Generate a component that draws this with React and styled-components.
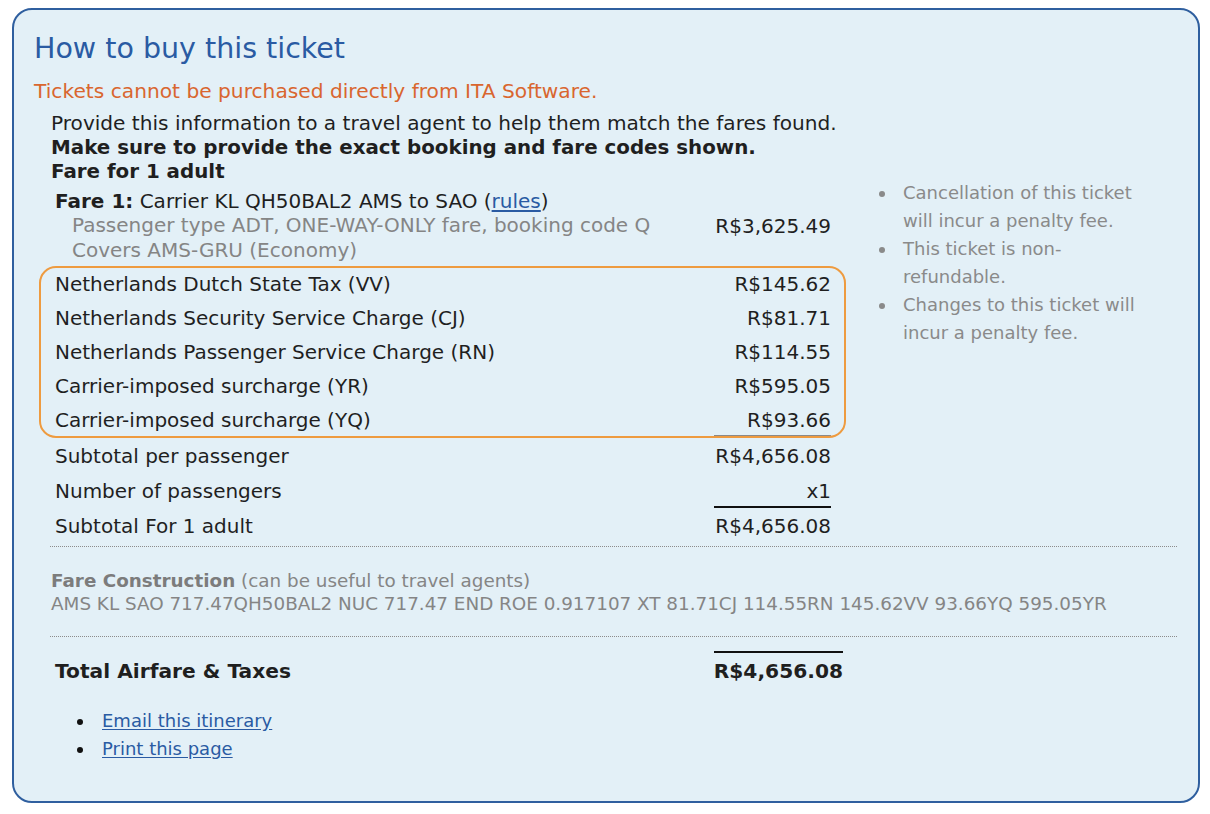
import React from 'react';
import styled, { createGlobalStyle } from 'styled-components';

const Global = createGlobalStyle`
  body {
    margin: 0;
    background: #ffffff;
    font-family: "DejaVu Sans", Verdana, sans-serif;
    color: #1f1f1f;
  }
`;

const Panel = styled.div`
  box-sizing: border-box;
  margin: 8px 0 0 12px;
  width: 1188px;
  height: 795px;
  border: 2px solid #2f5f9f;
  border-radius: 20px;
  background: #e3f0f7;
  padding: 22px 21px 0 20px;
`;

const Title = styled.h1`
  margin: 0;
  font-size: 28.5px;
  font-weight: normal;
  line-height: 34px;
  color: #2a5ba3;
`;

const Warning = styled.p`
  margin: 13px 0 0;
  font-size: 20.2px;
  line-height: 24px;
  color: #d9662f;
`;

const Intro = styled.div`
  margin: 8px 0 0 17px;
  font-size: 20.1px;
  line-height: 24px;
`;

const Bold = styled.div`
  font-weight: bold;
  font-size: 19.85px;
  line-height: 24px;
  padding-top: 1px;
  margin-bottom: -1px;
`;

const Main = styled.div`
  display: flex;
  align-items: flex-start;
  gap: 34px;
  margin-top: 1px;
`;

const Table = styled.div`
  width: 805px;
  margin-left: 6px;
  font-size: 20px;
`;

const Row = styled.div`
  display: grid;
  grid-template-columns: 1fr 117px;
  align-items: center;
  height: ${(p) => p.h || 34}px;
  padding: 0 14px 0 15px;
`;

const Amount = styled.div`
  text-align: right;
  white-space: nowrap;
  align-self: stretch;
  display: flex;
  align-items: center;
  justify-content: flex-end;
  border-top: 2px solid ${(p) => p.rule || 'transparent'};
  margin-top: -2px;
`;

const FareCell = styled.div`
  line-height: 24.5px;
`;

const Sub = styled.div`
  padding-left: 17px;
  color: #858585;
`;

const Link = styled.a`
  color: #2a5ba3;
  text-decoration: underline;
  text-underline-offset: 2px;
  cursor: pointer;
`;

const TaxBox = styled.div`
  outline: 2px solid #ee9b40;
  outline-offset: -1px;
  border-radius: 16px;
`;

const Bullets = styled.ul`
  margin: ${(p) => p.m || '0'};
  padding: 0;
  list-style: none;
`;

const Item = styled.li`
  display: flex;
  align-items: baseline;
  gap: ${(p) => p.gap || 18}px;
  &::before {
    content: '';
    flex: none;
    width: 6px;
    height: 6px;
    border-radius: 50%;
    background: ${(p) => p.dot || '#111'};
    transform: translateY(-2px);
  }
`;

const Notes = styled(Bullets)`
  width: 264px;
  margin-top: -5px;
  font-size: 18px;
  line-height: 28px;
  color: #8a8a8a;
`;

const Divider = styled.hr`
  margin: ${(p) => p.m || '0'};
  margin-left: 16px;
  border: none;
  border-top: 1px dotted #8c8c8c;
`;

const Construction = styled.div`
  margin: 22px 0 0 17px;
  font-size: 18.35px;
  line-height: 23px;
  color: #858585;
  b {
    color: #7c7c7c;
  }
`;

const TotalRow = styled.div`
  display: grid;
  grid-template-columns: 1fr auto;
  align-items: end;
  width: 805px;
  margin: 14px 0 0 6px;
  padding: 0 2px 0 15px;
  box-sizing: border-box;
  font-size: 20.2px;
  line-height: 24px;
  font-weight: bold;
`;

const TotalAmount = styled.div`
  border-top: 2px solid #111;
  padding-top: 6px;
  min-width: 129px;
  text-align: right;
`;

const Actions = styled(Bullets)`
  margin-top: 24px;
  padding-left: 43px;
  font-size: 18px;
  line-height: 28px;
`;

const taxes = [
  ['Netherlands Dutch State Tax (VV)', 'R$145.62'],
  ['Netherlands Security Service Charge (CJ)', 'R$81.71'],
  ['Netherlands Passenger Service Charge (RN)', 'R$114.55'],
  ['Carrier-imposed surcharge (YR)', 'R$595.05'],
  ['Carrier-imposed surcharge (YQ)', 'R$93.66'],
];

const notes = [
  'Cancellation of this ticket will incur a penalty fee.',
  'This ticket is non-refundable.',
  'Changes to this ticket will incur a penalty fee.',
];

export default function App() {
  return (
    <>
      <Global />
      <Panel>
        <Title>How to buy this ticket</Title>
        <Warning>Tickets cannot be purchased directly from ITA Software.</Warning>
        <Intro>
          <div>Provide this information to a travel agent to help them match the fares found.</div>
          <Bold>Make sure to provide the exact booking and fare codes shown.</Bold>
          <Bold>Fare for 1 adult</Bold>
        </Intro>
        <Main>
          <Table>
            <Row h={83}>
              <FareCell>
                <div>
                  <b>Fare 1:</b> Carrier KL QH50BAL2 AMS to SAO (<Link>rules</Link>)
                </div>
                <Sub>Passenger type ADT, ONE-WAY-ONLY fare, booking code Q</Sub>
                <Sub>Covers AMS-GRU (Economy)</Sub>
              </FareCell>
              <Amount>R$3,625.49</Amount>
            </Row>
            <TaxBox>
              {taxes.map(([label, value]) => (
                <Row key={label}>
                  <div>{label}</div>
                  <Amount>{value}</Amount>
                </Row>
              ))}
            </TaxBox>
            <Row h={37}>
              <div>Subtotal per passenger</div>
              <Amount rule="#8a8a8a">R$4,656.08</Amount>
            </Row>
            <Row>
              <div>Number of passengers</div>
              <Amount>x1</Amount>
            </Row>
            <Row h={35}>
              <div>Subtotal For 1 adult</div>
              <Amount rule="#111">R$4,656.08</Amount>
            </Row>
          </Table>
          <Notes>
            {notes.map((n) => (
              <Item key={n} dot="#8a8a8a">
                {n}
              </Item>
            ))}
          </Notes>
        </Main>
        <Divider m="3px 0 0" />
        <Construction>
          <div>
            <b>Fare Construction</b> (can be useful to travel agents)
          </div>
          <div>
            AMS KL SAO 717.47QH50BAL2 NUC 717.47 END ROE 0.917107 XT 81.71CJ 114.55RN 145.62VV 93.66YQ 595.05YR
          </div>
        </Construction>
        <Divider m="21px 0 0" />
        <TotalRow>
          <div>Total Airfare &amp; Taxes</div>
          <TotalAmount>R$4,656.08</TotalAmount>
        </TotalRow>
        <Actions>
          <Item gap={19}>
            <Link>Email this itinerary</Link>
          </Item>
          <Item gap={19}>
            <Link>Print this page</Link>
          </Item>
        </Actions>
      </Panel>
    </>
  );
}
